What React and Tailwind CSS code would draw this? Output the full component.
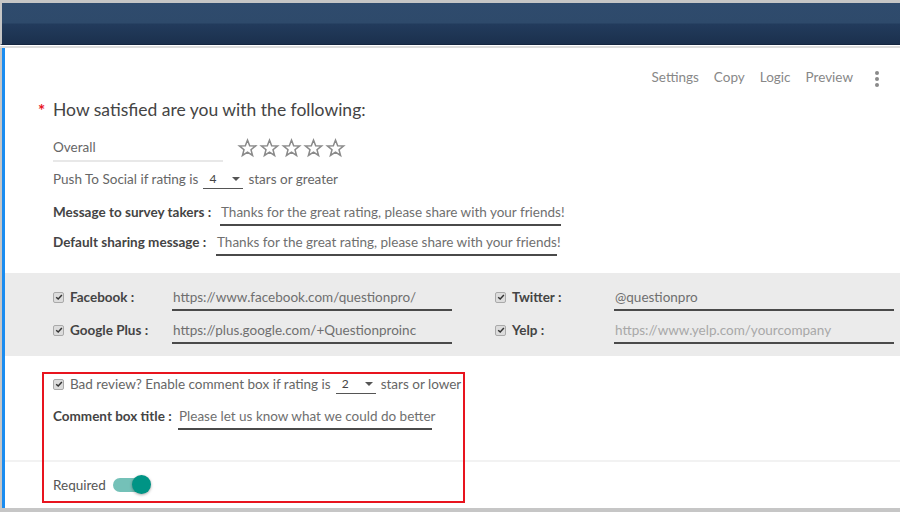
import React from 'react';

const Star = () => (
  <svg width="21" height="20" viewBox="0 0 24 24" fill="none" stroke="#8a8a8a" strokeWidth="1.8" strokeLinejoin="miter">
    <polygon points="12,2.5 14.6,9.2 21.8,9.5 16.2,14 18.1,21 12,17 5.9,21 7.8,14 2.2,9.5 9.4,9.2" />
  </svg>
);

const Check = () => (
  <span className="inline-flex shrink-0 w-[11px] h-[11px] items-center justify-center rounded-[2px] border border-[#a9a9a9] bg-[#dcdcdc]">
    <svg width="8" height="8" viewBox="0 0 10 10" fill="none" stroke="#333" strokeWidth="1.8">
      <path d="M1.5 5.2 L4 7.6 L8.6 2.4" />
    </svg>
  </span>
);

const Select = ({ value, w }) => (
  <span className={`inline-flex ${w} h-[20px] items-center justify-between border-b border-[#555] pl-[6px] pr-[3px] text-[12px] text-[#444]`}>
    <span>{value}</span>
    <span className="w-0 h-0 border-l-[4px] border-r-[4px] border-t-[4px] border-l-transparent border-r-transparent border-t-[#555]" />
  </span>
);

const Field = ({ children, w, muted }) => (
  <div className={`${w} h-[26px] border-b-2 border-[#4a4a4a] leading-[24px] pl-[1px] text-[13.5px] whitespace-nowrap ${muted ? 'text-[#a8a8a8]' : 'text-[#6f6f6f]'}`}>
    {children}
  </div>
);

const SocialRow = ({ label, value, muted }) => (
  <div className="flex items-start">
    <div className="flex items-center gap-[6px] h-[24px] w-[119px] whitespace-nowrap">
      <Check />
      <span className="font-bold text-[13.5px] text-[#444]">{label}</span>
    </div>
    <Field w="w-[280px]" muted={muted}>{value}</Field>
  </div>
);

export default function App() {
  return (
    <div className="relative w-[900px] h-[512px] overflow-hidden bg-white" style={{ fontFamily: 'Lato, "Open Sans", sans-serif' }}>
      <div className="h-[3px] bg-[#c6c6c6]" />
      <div className="h-[42px] border-l-2 border-[#c6c6c6] bg-[linear-gradient(to_bottom,#2f4b6d_0%,#2e4a6b_48%,#223b5c_52%,#1b304d_100%)] border-b border-b-[#152640]" />
      <div className="h-[3px] bg-white border-b-2 border-[#dcdcdc]" />

      <div className="h-[460px] border-l-2 border-[#c6c6c6]">
        <div className="h-full border-l-[3px] border-[#1a8cf0]">
          <div className="h-[50px] pt-[16px] pr-[21px] flex justify-end items-start gap-[15px] text-[13.5px] leading-[26px] text-[#888]">
            <span>Settings</span>
            <span>Copy</span>
            <span>Logic</span>
            <span>Preview</span>
            <span className="ml-[7px] flex flex-col gap-[2px] pt-[7px]">
              <span className="w-[4px] h-[4px] rounded-full bg-[#8a8a8a]" />
              <span className="w-[4px] h-[4px] rounded-full bg-[#8a8a8a]" />
              <span className="w-[4px] h-[4px] rounded-full bg-[#8a8a8a]" />
            </span>
          </div>

          <div className="pl-[48px]">
            <div className="relative h-[24px] leading-[24px] text-[17.5px] text-[#444] whitespace-nowrap">
              <span className="absolute -left-[15px] top-[1px] text-[17px] font-bold text-[#e8141e]">*</span>
              How satisfied are you with the following:
            </div>

            <div className="mt-[12px] flex items-start">
              <div className="w-[170px] h-[28px] border-b-2 border-[#e8e8e8] leading-[26px] text-[13.5px] text-[#666]">Overall</div>
              <div className="ml-[14px] mt-[4px] flex gap-[1px]">
                <Star /><Star /><Star /><Star /><Star />
              </div>
            </div>

            <div className="mt-[7px] h-[20px] flex items-center gap-[5px] text-[13.5px] text-[#666] whitespace-nowrap">
              <span>Push To Social if rating is</span>
              <Select value="4" w="w-[40px]" />
              <span>stars or greater</span>
            </div>

            <div className="mt-[11px] flex items-start">
              <span className="h-[24px] leading-[24px] font-bold text-[13.5px] text-[#444] w-[167px] whitespace-nowrap">Message to survey takers :</span>
              <Field w="w-[341px]">Thanks for the great rating, please share with your friends!</Field>
            </div>
            <div className="mt-[4px] flex items-start">
              <span className="h-[24px] leading-[24px] font-bold text-[13.5px] text-[#444] w-[163px] whitespace-nowrap">Default sharing message :</span>
              <Field w="w-[341px]">Thanks for the great rating, please share with your friends!</Field>
            </div>
          </div>

          <div className="mt-[17px] h-[83px] bg-[#ebebeb] pt-[12px] pl-[48px] flex flex-col gap-[7px]">
            <div className="flex">
              <SocialRow label="Facebook :" value="https://www.facebook.com/questionpro/" />
              <div className="ml-[43px]">
                <SocialRow label="Twitter :" value="@questionpro" />
              </div>
            </div>
            <div className="flex">
              <SocialRow label="Google Plus :" value="https://plus.google.com/+Questionproinc" />
              <div className="ml-[43px]">
                <SocialRow label="Yelp :" value="https://www.yelp.com/yourcompany" muted />
              </div>
            </div>
          </div>

          <div className="relative">
            <div className="pl-[48px] pt-[18px] h-[106px] border-b-2 border-[#f2f2f2]">
              <div className="h-[20px] flex items-center gap-[5px] text-[13.5px] text-[#666] whitespace-nowrap">
                <Check />
                <span className="ml-[1px]">Bad review? Enable comment box if rating is</span>
                <Select value="2" w="w-[40px]" />
                <span>stars or lower</span>
              </div>
              <div className="mt-[10px] flex items-start">
                <span className="h-[24px] leading-[24px] font-bold text-[13.5px] text-[#444] w-[125px] whitespace-nowrap">Comment box title :</span>
                <Field w="w-[254px]">Please let us know what we could do better</Field>
              </div>
            </div>
            <div className="pl-[48px] pt-[13px] flex items-center gap-[7px] text-[13.5px] text-[#555]">
              <span>Required</span>
              <span className="relative inline-block w-[37px] h-[14px] rounded-full bg-[#74c1b8]">
                <span className="absolute -right-[1px] -top-[3px] w-[19px] h-[19px] rounded-full bg-[#009485] shadow-[0_1px_3px_rgba(0,0,0,0.35)]" />
              </span>
            </div>
            <div className="absolute left-[37px] top-[16px] w-[423px] h-[131px] border-2 border-[#e8141e]" />
          </div>
        </div>
      </div>
      <div className="absolute left-0 bottom-0 w-full h-[4px] bg-[#c6c6c6]" />
    </div>
  );
}
